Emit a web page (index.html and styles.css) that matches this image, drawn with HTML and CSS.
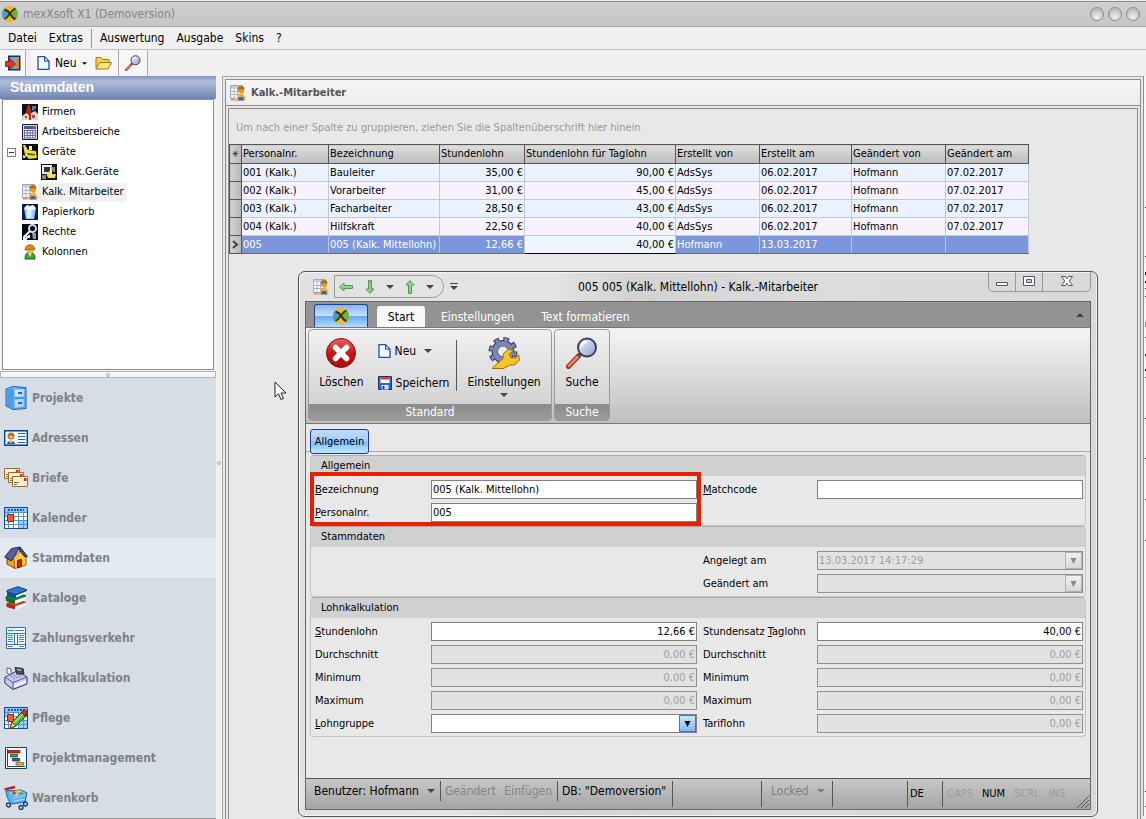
FILE: index.html
```
<!DOCTYPE html>
<html lang="de">
<head>
    <meta charset="UTF-8">
    <meta name="viewport" content="width=device-width, initial-scale=1.0">
    <title>mexXsoft X1 (Demoversion)</title>
    <link rel="stylesheet" href="styles.css">
</head>
<body>
    <!-- shared icons -->
    <svg class="icon-defs" width="0" height="0" aria-hidden="true">
        <defs>
            <linearGradient id="g-blue" x1="0" y1="0" x2="1" y2="1"><stop offset="0" stop-color="#e4f3ff"/><stop offset="1" stop-color="#8cc4f8"/></linearGradient>
            <linearGradient id="g-red" x1="0" y1="0" x2="0" y2="1"><stop offset="0" stop-color="#e8645c"/><stop offset="0.5" stop-color="#c8151a"/><stop offset="1" stop-color="#a90d12"/></linearGradient>
            <linearGradient id="g-lens" x1="0" y1="0" x2="1" y2="1"><stop offset="0" stop-color="#f4f6ff"/><stop offset="1" stop-color="#8f9ccf"/></linearGradient>
            <linearGradient id="g-green" x1="0" y1="0" x2="0" y2="1"><stop offset="0" stop-color="#b4ecb4"/><stop offset="1" stop-color="#5cba64"/></linearGradient>
            <symbol id="i-logo" viewBox="0 0 18 18">
                <circle cx="9" cy="9" r="8" fill="#f0b818"/>
                <path d="M9 9 14 2.800A8 8 0 0 1 14 15.200Z" fill="#6db33a"/>
                <path d="M9 9 3 3.500A8 8 0 0 0 3 14.500Z" fill="#4a9fb8"/>
                <path d="M3.500 4.500C6 5 8 7 9.500 9.500S12 13.500 14.500 14" fill="none" stroke="#2e3414" stroke-width="2"/>
                <path d="M14.500 3.500C11 5 9 8 7.500 10.500S5 13.500 3.500 14" fill="none" stroke="#2e3414" stroke-width="1.600"/>
            </symbol>
            <symbol id="i-exit" viewBox="0 0 16 16">
                <path d="M3 .5h12.500v15H3Z" fill="#12355c"/>
                <path d="M4.500 2H14v12H4.500Z" fill="#d8843a"/>
                <path d="M6 2h7l-2 3v9H6Z" fill="#58b4e8"/>
                <path d="M.5 6.500H5V3.500L10.500 9 5 14.500v-3H.5Z" fill="#e03818" stroke="#8c1408" stroke-width=".8"/>
            </symbol>
            <symbol id="i-page" viewBox="0 0 13 14">
                <path d="M1 .7h6.500L12 5.200v8.100H1Z" fill="#f2f8ff" stroke="#1c50b0" stroke-width="1.300"/>
                <path d="M7.500.7v4.500H12Z" fill="#b8d8f8" stroke="#1c50b0"/>
            </symbol>
            <symbol id="i-folder" viewBox="0 0 17 14">
                <path d="M1 12.500V1.500h5l1.500 2H14v3" fill="#f8cc50" stroke="#a87810"/>
                <path d="M1 13 4.500 6.500h12L13 13Z" fill="#ffe478" stroke="#a87810"/>
            </symbol>
            <symbol id="i-lens" viewBox="0 0 32 32">
                <path d="M2.500 29.500 13 18.500" stroke="#a02818" stroke-width="5" stroke-linecap="round"/>
                <path d="M2.800 29 12.500 19" stroke="#f08068" stroke-width="2.600" stroke-linecap="round"/>
                <path d="M12 19.500 15 16.500" stroke="#505468" stroke-width="3"/>
                <circle cx="21" cy="10.500" r="9" fill="url(#g-lens)" stroke="#3c3f58" stroke-width="2"/>
                <path d="M15 10a6.500 6.500 0 0 1 6-5" fill="none" stroke="#fff" stroke-width="2"/>
            </symbol>
            <symbol id="i-staff" viewBox="0 0 16 16">
                <path d="M.5.500h12v13H.5Z" fill="#fff" stroke="#a0a8c0"/>
                <path d="M1 1h11v2.500H1Z" fill="#c4cce4"/>
                <path d="M1 6.500h11M1 9.500h11M4 3v10M7.500 3v10" stroke="#a8b0cc"/>
                <path d="M1 13.500 9 15.500H1Z" fill="#f08848"/>
                <circle cx="11" cy="5" r="3.200" fill="#e89828"/>
                <path d="M7.500 4.500a3.500 3.500 0 0 1 7 0Z" fill="#b86c10"/>
                <path d="M6.500 15.500c0-5 2-7 4.500-7s4.500 2 4.500 7Z" fill="#f0b038"/>
                <path d="M9 12h4l1 3.500H8Z" fill="#3468c0"/>
            </symbol>
            <symbol id="i-firm" viewBox="0 0 16 16">
                <path d="M0 0h16v16H0Z" fill="#10101c"/>
                <path d="M4 16V7l2-6h2l1 6v9Z" fill="#b02818"/>
                <path d="M0 16v-4l4-3 3 2v5ZM9 16V9l4-2 3 3v6Z" fill="#e8d0c4"/>
                <path d="M10 2h4v3l-4 2Z" fill="#5878a8"/>
                <path d="M3 12h2v2H3Zm7-1h3v3h-3Z" fill="#a05048"/>
            </symbol>
            <symbol id="i-calc" viewBox="0 0 16 16">
                <path d="M.5.500h15v15H.5Z" fill="#d4d8f0" stroke="#16163c"/>
                <path d="M2 2h12v3H2Z" fill="#50587c"/>
                <path d="M11 2h3v2h-3Z" fill="#c44830"/>
                <path d="M2 6h12v8H2Z" fill="#fff"/>
                <path d="M2 6.500h12M2 9h12M2 11.500h12M2 14h12M2.500 6v8M5.300 6v8M8 6v8M10.700 6v8M13.500 6v8" stroke="#6468a8"/>
            </symbol>
            <symbol id="i-device" viewBox="0 0 16 16">
                <path d="M0 0h16v16H0Z" fill="#08080c"/>
                <path d="M1 1h2l3 5 8 1 1 7-8 1-4-4Z" fill="#e8dc48"/>
                <path d="M5 9l8 1v1.500L6 11Z" fill="#5c5814"/>
                <path d="M7 2h3v4H7Z" fill="#f4f0b0"/><path d="M1 11l3 1-1 2H1Z" fill="#e4e4d0"/>
            </symbol>
            <symbol id="i-device2" viewBox="0 0 16 16">
                <path d="M0 0h16v16H0Z" fill="#101010"/>
                <path d="M1 1h10v9H1Z" fill="#f0f0ec"/>
                <path d="M3 3h6v5H3Z" fill="#283838"/>
                <path d="M5 9l4-2 1 3h5l-1 4H7Z" fill="#f0e048"/>
                <path d="M1 11h4v4H1Zm9-8h4v5h-2Z" fill="#8c8c80"/>
            </symbol>
            <symbol id="i-bin" viewBox="0 0 16 16">
                <path d="M0 0h16v16H0Z" fill="#0a1c48"/>
                <path d="M2 4h12l-2 11H4Z" fill="#9cccf4"/>
                <path d="M5 6h5l-1 8H5Z" fill="#dcf0ff"/>
                <path d="M2 4 5 1l3 1 3-1 3 3-3 2H5Z" fill="#f4faff"/>
            </symbol>
            <symbol id="i-key" viewBox="0 0 16 16">
                <path d="M0 0h16v16H0Z" fill="#060810"/>
                <circle cx="10.500" cy="4.500" r="3.500" fill="none" stroke="#d0d8e4" stroke-width="2"/>
                <path d="M8 7 2 13v2h2l1-2h2v-2" fill="none" stroke="#e8f0f8" stroke-width="2"/>
                <path d="M10 9h4v6h-3Z" fill="#8c98a8"/>
            </symbol>
            <symbol id="i-crew" viewBox="0 0 16 16">
                <path d="M3 15c0-5 2-7 5-7s5 2 5 7Z" fill="#3cac34" stroke="#186018"/>
                <path d="M6.500 9h3L8 13Z" fill="#f4f4e8"/>
                <circle cx="8" cy="6" r="3.500" fill="#f0b048"/>
                <path d="M3 6c0-7 10-7 10 0l-2-.5H5Z" fill="#d89018" stroke="#8c5408" stroke-width=".7"/>
            </symbol>
            <symbol id="i-cabinet" viewBox="0 0 24 24">
                <path d="M2 3 9 .5 22 1.500v21L9 23.500 2 20Z" fill="#8cc8f8" stroke="#1460b8"/>
                <path d="M9 2v21L2.500 19.800V3.500Z" fill="#4c9ce4"/>
                <path d="M10 3 21 2.500v8.500l-11 .8ZM10 13l11-.8v9.300L10 22.500Z" fill="url(#g-blue)" stroke="#3c8cdc"/>
                <path d="M14 7h4M14 17h4" stroke="#103c80" stroke-width="1.500"/>
            </symbol>
            <symbol id="i-card" viewBox="0 0 24 24">
                <path d="M.7 4.700h22.600v14.600H.7Z" fill="#eef6ff" stroke="#0c3c88" stroke-width="1.400"/>
                <path d="M14 7.500h7.500M14 10.500h7.500M14 13.500h7.500M14 16.500h7.500" stroke="#2868b8"/>
                <circle cx="7" cy="10" r="3.500" fill="#b87818"/>
                <path d="M5.500 10h3v2h-3Z" fill="#f8c888"/>
                <path d="M3 18c0-4 8-4 8 0Z" fill="#3058a0"/>
                <path d="M6 14h2v3H6Z" fill="#f0d040"/>
            </symbol>
            <symbol id="i-mail" viewBox="0 0 24 24">
                <g fill="#fff0cc" stroke="#a06c28"><path d="M.5 2.500h15v10H.5Z"/><path d="M4.500 6.500h15v10h-15Z"/><path d="M8.500 10.500h15v10h-15Z"/></g>
                <path d="M12 4h2.500v2.500H12ZM16 8h2.500v2.500H16ZM20 12h2.500v3H20Z" fill="#d02818"/>
                <path d="M2 8.500h2M2 10.500h2M6 12.500h2M6 14.500h2M10 16.500h5M10 18.500h3" stroke="#7c6c58"/>
            </symbol>
            <symbol id="i-calendar" viewBox="0 0 24 24">
                <path d="M.5 1.500h23v21H.5Z" fill="#fff" stroke="#0c4c9c"/>
                <path d="M1 2h22v4H1Z" fill="#8cc4f4"/>
                <path d="M4 4h16" stroke="#205898" stroke-width="2" stroke-dasharray="2 1"/>
                <path d="M15 15h8v7h-8ZM1 6h4v4H1Z" fill="#9cccf8"/>
                <path d="M1 6.500h22M1 10.500h22M1 14.500h22M1 18.500h22M4.500 6v16M9.500 6v16M14.500 6v16M19.500 6v16" stroke="#4c94d8"/>
                <path d="M3.500 8.500h6v7h-6Z" fill="#f05838" stroke="#a41c0c"/>
            </symbol>
            <symbol id="i-house" viewBox="0 0 24 24">
                <path d="M3 12v6l8 4.500V13Z" fill="#f0a020" stroke="#804808"/>
                <path d="M9.500 12 17 4l5 7.500V19l-11 3.500Z" fill="#ffcc38" stroke="#a46008"/>
                <path d="M.7 11 7.500 2.500 16 1 9.500 11.500 7 15Z" fill="#5c5ca4" stroke="#28285c"/>
                <path d="M16 1 23.500 10.500l-2.500.5L15.500 4.500Z" fill="#484888" stroke="#28285c"/>
                <path d="M13.500 14.500l4-1.200v7.200l-4 1.200Z" fill="#c82810" stroke="#701408"/>
            </symbol>
            <symbol id="i-books" viewBox="0 0 24 24">
                <path d="M3 17.500 14 14.500l8 2-11 5-8-1Z" fill="#d83c28" stroke="#801808"/>
                <path d="M3 17.500v3.500l8 2.500v-3.500Z" fill="#b82818"/>
                <path d="M11 20.500l11-4v3l-11 4Z" fill="#fff"/>
                <path d="M2 11 13 7.500l9 2.500-11 5.500L2 13Z" fill="#188c30" stroke="#08501c"/>
                <path d="M2 11v4l9 3v-3.500Z" fill="#107024"/>
                <path d="M11 14.500l11-4v3.500l-11 4Z" fill="#f0f4f4"/>
                <path d="M3 6v4l9 2.500 10-5V4L12 9Z" fill="#184c98"/>
                <path d="M12 9.500l10-4v2l-10 4Z" fill="#f8fcff"/>
                <path d="M3 4.500 14 .7 23 4 12 8.500 3 6Z" fill="#2c78d0" stroke="#103c80"/>
            </symbol>
            <symbol id="i-sheet" viewBox="0 0 24 24">
                <path d="M2.500 1.500h19v21h-19Z" fill="#f4faff" stroke="#2c6cac"/>
                <path d="M4 4.500h6" stroke="#50a050" stroke-width="1.500"/>
                <path d="M11 4.500h9M3 7.500h18M3 18.500h18M10.500 7v12M13.500 7v12" stroke="#3c78b4"/>
                <path d="M4 9.500h5M4 11.500h5M4 13.500h5M4 15.500h5M4 20.500h5M15 9.500h5M15 11.500h5M15 13.500h5M15 15.500h5M15 20.500h5" stroke="#4c84bc"/>
            </symbol>
            <symbol id="i-register" viewBox="0 0 24 24">
                <path d="M1 11 13 5l10 6v7L9 23.500.7 17Z" fill="#c8c8ec" stroke="#34346c"/>
                <path d="M1 11 9 16.500 23 11M9 16.500v7" fill="none" stroke="#5c5c94"/>
                <path d="M10 18.500 22 14v3l-12 4.500Z" fill="#f0f0ff"/>
                <path d="M3 2l4 1v6l-4-2Z" fill="#fff" stroke="#5c5c7c"/>
                <path d="M11 1.500l8 1 1 5-7 1Z" fill="#445454" stroke="#242440"/>
                <path d="M13 3.500l4 .5" stroke="#7cdc7c" stroke-width="1.500"/>
                <path d="M7 11l8-3M9 13l9-3.500" stroke="#8080b8" stroke-dasharray="2 1"/>
            </symbol>
            <symbol id="i-pencil" viewBox="0 0 24 24">
                <path d="M6 22.500 8 16 19 5l4 4L12 20Z" fill="#58b038" stroke="#1c5810"/>
                <path d="M10 17 20.500 6.500" stroke="#a8e468" stroke-width="1.500"/>
                <path d="M17.500 6.500 20.500 3l3 3.500L21 10Z" fill="#e02c18" stroke="#801008"/>
                <path d="M6 22.500 8 16l4 4Z" fill="#f4cc80" stroke="#604018"/>
            </symbol>
            <symbol id="i-gantt" viewBox="0 0 24 24">
                <path d="M1.500 1.500h21v21h-21Z" fill="#f4f8ff" stroke="#10406c"/>
                <path d="M3.500 3v17.500H21" fill="none" stroke="#3c3c50"/>
                <path d="M4 4.500h12v2.500H4Z" fill="#e02010" stroke="#601010" stroke-width=".7"/>
                <path d="M6.500 8.500h7V11h-7Z" fill="#30b030" stroke="#104810" stroke-width=".7"/>
                <path d="M8.500 12.500h7V15h-7Z" fill="#3060d0" stroke="#102050" stroke-width=".7"/>
                <path d="M12 16.500h7.500V19H12Z" fill="#f4c020" stroke="#604c10" stroke-width=".7"/>
            </symbol>
            <symbol id="i-cart" viewBox="0 0 24 24">
                <path d="M2 5c1 7 3 11 6 13l13-2 2-9-6-3Z" fill="#58b4f0" stroke="#1464ac"/>
                <path d="M4 6l12-2 6 3.500-11 3Z" fill="#c8ecff" stroke="#3c90d0" stroke-width=".7"/>
                <path d="M7 6l4-1 2 3-3 1Z" fill="#d84030"/><path d="M11 5l4-.500 2 2-4 1.500Z" fill="#f0c830"/><path d="M14 7l4-1 2 1.500-5 1.500Z" fill="#48a838"/>
                <path d="M9 12l13-3M10 15l11-2" stroke="#a8dcfc"/>
                <path d="M.7 3.500 11 1" stroke="#c01c18" stroke-width="2.500"/>
                <g fill="#a8d4f4" stroke="#183c68" stroke-width="1.300"><circle cx="4.500" cy="19" r="2"/><circle cx="17" cy="21.500" r="2"/><circle cx="21.500" cy="18" r="2"/></g>
            </symbol>
            <symbol id="i-delete" viewBox="0 0 32 32">
                <circle cx="16" cy="16" r="14.500" fill="url(#g-red)" stroke="#8c0c10"/>
                <path d="M10.500 10.500 21.500 21.500M21.500 10.500 10.500 21.500" stroke="#fff" stroke-width="5.500" stroke-linecap="round"/>
            </symbol>
            <symbol id="i-disk" viewBox="0 0 14 14">
                <path d="M.5.500h13v13H.5Z" fill="#2868c8" stroke="#103878"/>
                <path d="M2.500 1h9v6h-9Z" fill="#fff"/><path d="M2.500 1h9v2.500h-9Z" fill="#e03828"/>
                <path d="M3.500 9h7v4.500h-7Z" fill="#d8e4f4"/><path d="M4.500 10h2v3h-2Z" fill="#183c78"/>
            </symbol>
            <symbol id="i-gear" viewBox="0 0 32 32">
                <circle cx="15" cy="14.500" r="12" fill="none" stroke="#303858" stroke-width="5" stroke-dasharray="5.400 4.020"/>
                <circle cx="15" cy="14.500" r="8" fill="none" stroke="#303858" stroke-width="7"/>
                <circle cx="15" cy="14.500" r="12" fill="none" stroke="#7c88b4" stroke-width="3.200" stroke-dasharray="3.600 5.820" stroke-dashoffset="-.9"/>
                <circle cx="15" cy="14.500" r="8" fill="none" stroke="#7c88b4" stroke-width="5"/>
                <circle cx="15" cy="14.500" r="5" fill="#ececf0"/>
                <path d="M4 31.500 15 21.500l.5-5 5-4 5.500.5-4.500 4 1 3.500 4.500 1 3.800-3.700.7 5-4.500 5-5.500.4L15.500 31.500Z" fill="#f8c424" stroke="#a06c08"/>
            </symbol>
            <symbol id="i-arrow" viewBox="0 0 16 16">
                <path d="M1.500 8 6 4v2.500h8.500v3H6V12Z" fill="url(#g-green)" stroke="#4c9c54"/>
            </symbol>
            <symbol id="i-down" viewBox="0 0 8 4"><path d="M0 0h8L4 4Z" fill="currentColor"/></symbol>
            <symbol id="i-combo" viewBox="0 0 9 9"><path d="M1.500 2h6L4.500 8Z" fill="currentColor"/></symbol>
        </defs>
    </svg>

    <div class="app">
        <header class="titlebar">
            <svg class="icon-18"><use href="#i-logo"/></svg>
            <h1>mexXsoft X1 (Demoversion)</h1>
            <div class="round-buttons">
                <button type="button" aria-label="Minimieren"></button>
                <button type="button" aria-label="Maximieren"></button>
                <button type="button" aria-label="Schließen"></button>
            </div>
        </header>

        <nav class="menubar">
            <button type="button">Datei</button>
            <button type="button">Extras</button>
            <span class="menu-line"></span>
            <button type="button">Auswertung</button>
            <button type="button">Ausgabe</button>
            <button type="button">Skins</button>
            <button type="button">?</button>
        </nav>

        <div class="toolbar">
            <div class="tool-group">
                <button type="button" aria-label="Beenden"><svg class="icon-16"><use href="#i-exit"/></svg></button>
            </div>
            <div class="tool-group">
                <button type="button" class="tool-new"><svg class="icon-page"><use href="#i-page"/></svg>Neu <svg class="caret-small"><use href="#i-down"/></svg></button>
                <button type="button" aria-label="Öffnen"><svg class="icon-folder"><use href="#i-folder"/></svg></button>
            </div>
            <div class="tool-group">
                <button type="button" aria-label="Suchen"><svg class="icon-16"><use href="#i-lens"/></svg></button>
            </div>
        </div>

        <div class="workspace">
            <aside class="sidebar">
                <h2>Stammdaten</h2>
                <ul class="tree">
                    <li><svg class="icon-16"><use href="#i-firm"/></svg><span>Firmen</span></li>
                    <li><svg class="icon-16"><use href="#i-calc"/></svg><span>Arbeitsbereiche</span></li>
                    <li class="open"><button type="button" class="toggle" aria-label="Zuklappen"></button><svg class="icon-16"><use href="#i-device"/></svg><span>Geräte</span></li>
                    <li class="child"><svg class="icon-16"><use href="#i-device2"/></svg><span>Kalk.Geräte</span></li>
                    <li class="selected"><svg class="icon-16"><use href="#i-staff"/></svg><span>Kalk. Mitarbeiter</span></li>
                    <li><svg class="icon-16"><use href="#i-bin"/></svg><span>Papierkorb</span></li>
                    <li><svg class="icon-16"><use href="#i-key"/></svg><span>Rechte</span></li>
                    <li><svg class="icon-16"><use href="#i-crew"/></svg><span>Kolonnen</span></li>
                </ul>
                <div class="splitter-h"><i></i></div>
                <nav class="modules">
                    <a href="#"><svg class="icon-24"><use href="#i-cabinet"/></svg>Projekte</a>
                    <a href="#"><svg class="icon-24"><use href="#i-card"/></svg>Adressen</a>
                    <a href="#"><svg class="icon-24"><use href="#i-mail"/></svg>Briefe</a>
                    <a href="#"><svg class="icon-24"><use href="#i-calendar"/></svg>Kalender</a>
                    <a href="#" class="active"><svg class="icon-24"><use href="#i-house"/></svg>Stammdaten</a>
                    <a href="#"><svg class="icon-24"><use href="#i-books"/></svg>Kataloge</a>
                    <a href="#"><svg class="icon-24"><use href="#i-sheet"/></svg>Zahlungsverkehr</a>
                    <a href="#"><svg class="icon-24"><use href="#i-register"/></svg>Nachkalkulation</a>
                    <a href="#"><svg class="icon-24"><use href="#i-calendar"/><use href="#i-pencil"/></svg>Pflege</a>
                    <a href="#"><svg class="icon-24"><use href="#i-gantt"/></svg>Projektmanagement</a>
                    <a href="#"><svg class="icon-24"><use href="#i-cart"/></svg>Warenkorb</a>
                </nav>
            </aside>
            <div class="splitter-v"><i></i></div>

            <main class="content">
                <div class="content-head">
                    <svg class="icon-16"><use href="#i-staff"/></svg>
                    <h2>Kalk.-Mitarbeiter</h2>
                </div>
                <div class="content-body">
                    <div class="grid-panel">
                        <p class="group-hint">Um nach einer Spalte zu gruppieren, ziehen Sie die Spaltenüberschrift hier hinein</p>
                        <table class="grid">
                            <colgroup>
                                <col class="c-mark"><col class="c-nr"><col class="c-name"><col class="c-wage"><col class="c-day">
                                <col class="c-by"><col class="c-on"><col class="c-mod"><col class="c-modon">
                            </colgroup>
                            <thead>
                                <tr><th class="mark">✳</th><th>Personalnr.</th><th>Bezeichnung</th><th>Stundenlohn</th><th>Stundenlohn für Taglohn</th><th>Erstellt von</th><th>Erstellt am</th><th>Geändert von</th><th>Geändert am</th></tr>
                            </thead>
                            <tbody>
                                <tr><td class="mark"></td><td>001 (Kalk.)</td><td>Bauleiter</td><td class="num">35,00 €</td><td class="num">90,00 €</td><td>AdsSys</td><td>06.02.2017</td><td>Hofmann</td><td>07.02.2017</td></tr>
                                <tr><td class="mark"></td><td>002 (Kalk.)</td><td>Vorarbeiter</td><td class="num">31,00 €</td><td class="num">45,00 €</td><td>AdsSys</td><td>06.02.2017</td><td>Hofmann</td><td>07.02.2017</td></tr>
                                <tr><td class="mark"></td><td>003 (Kalk.)</td><td>Facharbeiter</td><td class="num">28,50 €</td><td class="num">43,00 €</td><td>AdsSys</td><td>06.02.2017</td><td>Hofmann</td><td>07.02.2017</td></tr>
                                <tr><td class="mark"></td><td>004 (Kalk.)</td><td>Hilfskraft</td><td class="num">22,50 €</td><td class="num">40,00 €</td><td>AdsSys</td><td>06.02.2017</td><td>Hofmann</td><td>07.02.2017</td></tr>
                                <tr class="current"><td class="mark"><svg viewBox="0 0 7 9"><path d="M1 1 5 4.500 1 8" fill="none" stroke="#444" stroke-width="2"/></svg></td><td>005</td><td>005 (Kalk. Mittellohn)</td><td class="num">12,66 €</td><td class="num focus">40,00 €</td><td>Hofmann</td><td>13.03.2017</td><td></td><td></td></tr>
                            </tbody>
                        </table>
                    </div>
                </div>
            </main>
            <svg class="edge" width="3" height="740" aria-hidden="true">
                <path d="M.5 0v740" stroke="#8c8c8c"/>
                <path d="M1 0h2v740H1Z" fill="#f6f6f6"/>
                <path d="M2.500 131v1M2.500 180v1M2.500 196v3M2.500 205v2M2.500 212v1M2.500 220v1M2.500 261v1M2.500 278v2M2.500 293v2M2.500 301v1M2.500 342v1M2.500 382v1M2.500 423v1M2.500 464v1M2.500 715v1M2.500 730v1" stroke="#111"/>
                <path d="M2.500 246v5" stroke="#48a0d8"/>
            </svg>
        </div>
    </div>

    <section class="dialog" role="dialog" aria-labelledby="dialog-title">
        <div class="dialog-title">
            <svg class="icon-16"><use href="#i-staff"/></svg>
            <div class="quick">
                <button type="button" aria-label="Zurück"><svg class="icon-16"><use href="#i-arrow"/></svg></button>
                <button type="button" aria-label="Weiter"><svg class="icon-16 arrow-down"><use href="#i-arrow"/></svg></button>
                <button type="button" aria-label="Weiter-Liste"><svg class="caret"><use href="#i-down"/></svg></button>
                <button type="button" aria-label="Vorheriger"><svg class="icon-16 arrow-up"><use href="#i-arrow"/></svg></button>
                <button type="button" aria-label="Vorheriger-Liste"><svg class="caret"><use href="#i-down"/></svg></button>
            </div>
            <button type="button" class="quick-more" aria-label="Anpassen"><svg class="caret"><use href="#i-down"/></svg></button>
            <h2 id="dialog-title">005 005 (Kalk. Mittellohn) - Kalk.-Mitarbeiter</h2>
            <div class="window-buttons">
                <button type="button" aria-label="Minimieren"><svg width="14" height="14" viewBox="0 0 14 14"><path d="M1.500 7.500h11v3h-11Z" fill="#fff" stroke="#505468"/></svg></button>
                <button type="button" aria-label="Maximieren"><svg width="14" height="14" viewBox="0 0 14 14"><path d="M1.500 1.500h11v9h-11Z" fill="#fff" stroke="#505468"/><path d="M4.500 4.500h5v3h-5Z" fill="#ccc" stroke="#505468"/></svg></button>
                <button type="button" class="close" aria-label="Schließen"><svg width="14" height="14" viewBox="0 0 14 14"><path d="M1.500 1.500h4L7 3.700l1.500-2.200h4L9.300 6l3.200 4.500h-4L7 8.300l-1.500 2.200h-4L4.700 6Z" fill="#fff" stroke="#505468"/></svg></button>
            </div>
        </div>

        <div class="dialog-body">
            <div class="ribbon-tabs">
                <button type="button" class="app-button" aria-label="Menü"><svg class="icon-18"><use href="#i-logo"/></svg></button>
                <button type="button" class="ribbon-tab active">Start</button>
                <button type="button" class="ribbon-tab">Einstellungen</button>
                <button type="button" class="ribbon-tab">Text formatieren</button>
                <button type="button" class="collapse" aria-label="Menüband minimieren"><svg class="caret"><use href="#i-down"/></svg></button>
            </div>

            <div class="ribbon">
                <div class="ribbon-group">
                    <div class="ribbon-items">
                        <button type="button" class="big"><svg class="icon-32"><use href="#i-delete"/></svg>Löschen</button>
                        <div class="small-stack">
                            <button type="button"><svg class="icon-page"><use href="#i-page"/></svg>Neu<svg class="caret"><use href="#i-down"/></svg></button>
                            <button type="button"><svg class="icon-disk"><use href="#i-disk"/></svg>Speichern</button>
                        </div>
                        <button type="button" class="big settings"><svg class="icon-32"><use href="#i-gear"/></svg>Einstellungen<svg class="caret"><use href="#i-down"/></svg></button>
                    </div>
                    <div class="ribbon-caption">Standard</div>
                </div>
                <div class="ribbon-group search">
                    <div class="ribbon-items">
                        <button type="button" class="big"><svg class="icon-32"><use href="#i-lens"/></svg>Suche</button>
                    </div>
                    <div class="ribbon-caption">Suche</div>
                </div>
            </div>

            <div class="page-tabs">
                <button type="button">Allgemein</button>
            </div>

            <form class="page">
                <fieldset>
                    <div class="legend">Allgemein</div>
                    <div class="fields">
                        <label for="bezeichnung"><u>B</u>ezeichnung</label><input type="text" id="bezeichnung" value="005 (Kalk. Mittellohn)">
                        <label for="matchcode"><u>M</u>atchcode</label><input type="text" id="matchcode">
                        <label for="personalnr"><u>P</u>ersonalnr.</label><input type="text" id="personalnr" value="005">
                    </div>
                    <div class="highlight"></div>
                </fieldset>
                <fieldset>
                    <div class="legend">Stammdaten</div>
                    <div class="fields">
                        <label for="angelegt" class="right">Angelegt am</label>
                        <span class="combo"><select id="angelegt" disabled><option>13.03.2017 14:17:29</option></select><svg><use href="#i-combo"/></svg></span>
                        <label for="geaendert" class="right">Geändert am</label>
                        <span class="combo"><select id="geaendert" disabled><option></option></select><svg><use href="#i-combo"/></svg></span>
                    </div>
                </fieldset>
                <fieldset>
                    <div class="legend">Lohnkalkulation</div>
                    <div class="fields money">
                        <label for="stundenlohn"><u>S</u>tundenlohn</label><input type="text" id="stundenlohn" value="12,66 €">
                        <label for="taglohn">Stundensatz <u>T</u>aglohn</label><input type="text" id="taglohn" value="40,00 €">
                        <label for="durchschnitt1">Durchschnitt</label><input type="text" id="durchschnitt1" value="0,00 €" disabled>
                        <label for="durchschnitt2">Durchschnitt</label><input type="text" id="durchschnitt2" value="0,00 €" disabled>
                        <label for="minimum1">Minimum</label><input type="text" id="minimum1" value="0,00 €" disabled>
                        <label for="minimum2">Minimum</label><input type="text" id="minimum2" value="0,00 €" disabled>
                        <label for="maximum1">Maximum</label><input type="text" id="maximum1" value="0,00 €" disabled>
                        <label for="maximum2">Maximum</label><input type="text" id="maximum2" value="0,00 €" disabled>
                        <label for="lohngruppe"><u>L</u>ohngruppe</label>
                        <span class="combo"><select id="lohngruppe"><option></option></select><svg><use href="#i-combo"/></svg></span>
                        <label for="tariflohn">Tariflohn</label><input type="text" id="tariflohn" value="0,00 €" disabled>
                    </div>
                </fieldset>
            </form>

            <footer class="status">
                <button type="button" class="user">Benutzer: Hofmann<svg class="caret"><use href="#i-down"/></svg></button>
                <div class="changed"><span>Geändert</span><span>Einfügen</span></div>
                <div class="database">DB: "Demoversion"</div>
                <div class="spacer"></div>
                <button type="button" class="locked" disabled>Locked<svg class="caret"><use href="#i-down"/></svg></button>
                <div class="blank"></div>
                <div class="lang">DE</div>
                <div class="keys"><span>CAPS</span><span class="on">NUM</span><span>SCRL</span><span>INS</span></div>
                <svg class="grip" width="12" height="12"><path d="M0 12 12 0M4 12l8-8M8 12l4-4" stroke="#555"/></svg>
            </footer>
        </div>
    </section>

    <svg class="cursor" width="13" height="20" viewBox="0 0 13 20" aria-hidden="true"><path d="M1 1v15l3.500-3.200L7 18.500l2.500-1L7 12h5Z" fill="#fff" stroke="#222"/></svg>
</body>
</html>
```
FILE: styles.css
```
* {
    box-sizing: border-box;
}
body {
    margin: 0;
    height: 100vh;
    overflow: hidden;
    position: relative;
    background: #f0f0f0;
    color: #000;
    font-family: 'DejaVu Sans Condensed', 'DejaVu Sans', sans-serif;
    font-size: 11px;
    line-height: 14px;
}
h1, h2, p, ul, fieldset {
    margin: 0;
    padding: 0;
    border: none;
    font-size: inherit;
    font-weight: normal;
}
button, input, select {
    margin: 0;
    padding: 0;
    border: none;
    background: none;
    color: inherit;
    font: inherit;
}
svg {
    flex: none;
}
.icon-defs {
    position: absolute;
}
.icon-16 { width: 16px; height: 16px; }
.icon-18 { width: 18px; height: 18px; }
.icon-24 { width: 24px; height: 24px; }
.icon-32 { width: 32px; height: 32px; }
.icon-page { width: 13px; height: 14px; }
.icon-disk { width: 14px; height: 14px; }
.icon-folder { width: 17px; height: 14px; }
.caret { width: 8px; height: 4px; color: #444; }
.caret-small { width: 5px; height: 3px; }

/* main window */
.app {
    height: 100%;
    display: flex;
    flex-direction: column;
}
.titlebar {
    display: flex;
    align-items: center;
    height: 26px;
    padding: 0 6px 0 1px;
    margin-top: 1px;
    border-top: 1px solid #8a8a8a;
    border-bottom: 1px solid #a8a8a8;
    background: linear-gradient(#cfcfcf, #c6c6c6);
    color: #858585;
    font-size: 12px;
}
.titlebar h1 {
    flex: 1;
    margin-left: 4px;
}
.round-buttons {
    display: flex;
    gap: 4px;
}
.round-buttons button {
    width: 14px;
    height: 14px;
    border: 1px solid #8c8c8c;
    border-radius: 50%;
    background: radial-gradient(circle at 50% 75%, #f4f4f4, #bcbcbc 70%);
}
.menubar {
    display: flex;
    align-items: center;
    height: 23px;
    gap: 12px;
    padding-left: 8px;
    border-bottom: 1px solid #c0c0c0;
    font-size: 12px;
}
.menu-line {
    width: 1px;
    height: 19px;
    margin: 0 -4px;
    background: #999;
}
.toolbar {
    display: flex;
    height: 26px;
    font-size: 12px;
}
.tool-group {
    display: flex;
    align-items: center;
    gap: 8px;
    padding: 0 6px;
    border-right: 1px solid #a8a8a8;
    background: #f6f6f6;
}
.tool-group:first-child {
    padding: 0 4px 0 5px;
    margin-right: 5px;
}
.tool-group button {
    display: flex;
    align-items: center;
}
.tool-new {
    gap: 5px;
}
.workspace {
    flex: 1;
    min-height: 0;
    display: flex;
}
.sidebar {
    width: 216px;
    display: flex;
    flex-direction: column;
}
.sidebar h2 {
    height: 23px;
    padding-left: 10px;
    background: linear-gradient(#8196c8, #b0bcd8 25%, #7085b4);
    color: #fff;
    font: bold 14px/22px 'Liberation Sans', sans-serif;
}
.tree {
    flex: 1;
    margin: 0 2px 1px;
    padding-top: 2px;
    border: 1px solid #8c8c8c;
    background: #fff;
    list-style: none;
}
.tree li {
    display: flex;
    align-items: center;
    height: 20px;
    padding-left: 19px;
}
.tree .child {
    padding-left: 38px;
}
.tree .open {
    padding-left: 4px;
}
.tree span {
    padding: 2px 2px 3px 4px;
}
.tree .selected span {
    background: #f0f0f0;
}
.toggle {
    width: 9px;
    height: 9px;
    margin-right: 6px;
    border: 1px solid #808080;
    background: linear-gradient(#333, #333) center / 5px 1px no-repeat;
}
.splitter-h {
    height: 7px;
    display: flex;
    align-items: center;
    justify-content: center;
    border: 1px solid #b4b4b4;
    background: #f6f6f6;
}
.splitter-h i, .splitter-v i {
    width: 4px;
    height: 4px;
    border: 1px solid #aaa;
    border-radius: 50%;
}
.modules {
    background: #d6dde5;
    border-bottom: 1px solid #999;
}
.modules a {
    display: flex;
    align-items: center;
    gap: 4px;
    height: 40px;
    padding-left: 4px;
    color: #7d8288;
    font-size: 12px;
    font-weight: bold;
    text-decoration: none;
}
.modules .active {
    background: #e3eaf2;
}
.splitter-v {
    width: 7px;
    display: flex;
    align-items: center;
    justify-content: center;
    padding-top: 30px;
    border-right: 1px solid #a4a4a4;
}
.content {
    flex: 1;
    min-width: 0;
    display: flex;
    flex-direction: column;
    padding: 2px 2px 0;
    background: #e8e8e8;
    border-top: 1px solid #a8a8a8;
}
.content-head {
    display: flex;
    align-items: center;
    gap: 5px;
    height: 27px;
    padding-left: 4px;
    border: 1px solid #8c8c8c;
    background: linear-gradient(#f6f6f6, #ececec);
    color: #555;
}
.content-head h2 {
    font-weight: bold;
}
.content-body {
    flex: 1;
    display: flex;
    padding: 2px 2px 0;
    border: 1px solid #8c8c8c;
    border-width: 0 1px;
}
.grid-panel {
    flex: 1;
    border: 1px solid #8c8c8c;
    border-bottom: none;
}
.group-hint {
    padding: 12px 7px 9px;
    color: #999;
}
.grid {
    width: 799px;
    table-layout: fixed;
    border-collapse: collapse;
}
.c-mark { width: 12px; }
.c-nr { width: 87px; }
.c-name { width: 111px; }
.c-wage { width: 85px; }
.c-day { width: 151px; }
.c-by { width: 84px; }
.c-on { width: 92px; }
.c-mod { width: 94px; }
.c-modon { width: 83px; }
.grid th {
    height: 19px;
    padding: 0 1px;
    border: 1px solid #555;
    background: linear-gradient(#dedede, #bcbcbc);
    font-weight: normal;
    text-align: left;
}
.grid td {
    height: 18px;
    padding: 0 1px;
    border: 1px solid #c0c8dc;
    background: #eaf2ff;
    white-space: nowrap;
}
.grid tr:nth-child(even) td {
    background: #f8f2ff;
}
.grid .num {
    text-align: right;
}
.grid .mark, .grid tr:nth-child(even) .mark {
    padding: 0;
    border: 1px solid #555;
    background: linear-gradient(90deg, #d4d4d4, #b4b4b4);
    font-size: 9px;
    text-align: center;
}
.mark svg {
    display: block;
    width: 7px;
    height: 9px;
    margin: 0 auto;
}
.grid .current td:not(.mark) {
    border-top-color: #6c6c58;
    border-bottom-color: #6c6c58;
    background: #7b96dd;
    color: #fff;
}
.grid .current .focus:not(.mark) {
    border-top-color: #000;
    border-bottom-color: #000;
    background: #eef6ff;
    color: #000;
}

/* record window */
.dialog {
    position: absolute;
    top: 271px;
    right: 48px;
    bottom: 2px;
    left: 298px;
    display: flex;
    flex-direction: column;
    padding: 0 6px 6px;
    border: 1px solid #555;
    border-radius: 7px;
    background: linear-gradient(100deg, #e2e2e2, #e4e4e4 28%, #d2d2d2 38%, #dcdcdc 60%, #d8d8d8);
    box-shadow: inset 0 0 0 1px #f4f4f4;
}
.dialog-title {
    display: flex;
    align-items: center;
    height: 29px;
    padding-left: 8px;
}
.quick {
    display: flex;
    align-items: center;
    gap: 8px;
    height: 23px;
    margin-left: 5px;
    padding: 0 9px 0 3px;
    border: 1px solid #999;
    border-radius: 0 12px 12px 0;
}
.quick button, .quick-more {
    display: flex;
}
.arrow-down {
    transform: rotate(-90deg);
}
.arrow-up {
    transform: rotate(90deg);
}
.quick-more {
    margin-left: 6px;
    padding-top: 2px;
    border-top: 1px solid #444;
}
.dialog-title h2 {
    flex: 1;
    padding-right: 50px;
    text-align: center;
    font-size: 12px;
}
.window-buttons {
    display: flex;
    align-self: flex-start;
    height: 20px;
    border: 1px solid #999;
    border-top: none;
    border-radius: 0 0 5px 5px;
}
.window-buttons button {
    display: flex;
    align-items: center;
    justify-content: center;
    width: 27px;
    border-right: 1px solid #999;
}
.window-buttons .close {
    width: 47px;
    border-right: none;
}
.dialog-body {
    flex: 1;
    min-height: 0;
    display: flex;
    flex-direction: column;
    border: 1px solid #666;
    background: #e8e8e8;
}
.ribbon-tabs {
    display: flex;
    align-items: flex-end;
    height: 26px;
    padding: 0 6px 0 8px;
    border-bottom: 1px solid #777;
    background: #939393;
    color: #fff;
    font-size: 12px;
}
.app-button {
    display: flex;
    justify-content: center;
    align-items: center;
    width: 54px;
    height: 23px;
    margin-right: 9px;
    border: 1px solid #1c449c;
    border-bottom: none;
    border-radius: 3px 3px 0 0;
    background: linear-gradient(#8cb4f0, #c4e0fc 48%, #6ca8f0 52%, #b4dcff);
}
.ribbon-tab {
    height: 21px;
    padding: 0 8px;
    margin-right: 8px;
}
.ribbon-tab.active {
    width: 48px;
    border-radius: 3px 3px 0 0;
    background: #f8f8f8;
    color: #000;
}
.ribbon-tab + .ribbon-tab {
    margin-right: 11px;
}
.collapse {
    display: flex;
    align-self: center;
    margin-left: auto;
    transform: rotate(180deg);
}
.ribbon {
    display: flex;
    gap: 2px;
    height: 96px;
    padding: 1px 2px;
    border-bottom: 1px solid #777;
    background: linear-gradient(#f4f4f4, #e0e0e0 40%, #bfbfbf);
    font-size: 12px;
}
.ribbon-group {
    display: flex;
    flex-direction: column;
    width: 244px;
    height: 92px;
    border: 1px solid #999;
    border-radius: 4px;
    background: linear-gradient(#f0f0f0, #cdcdcd);
    overflow: hidden;
}
.ribbon-group.search {
    width: 56px;
}
.ribbon-items {
    flex: 1;
    display: flex;
    align-items: flex-start;
    justify-content: center;
    padding-top: 7px;
}
.big {
    display: flex;
    flex-direction: column;
    align-items: center;
    gap: 6px;
}
.big .caret {
    margin-top: -2px;
}
.small-stack {
    display: flex;
    flex-direction: column;
    gap: 18px;
    padding: 7px 0 0 14px;
}
.small-stack button {
    display: flex;
    align-items: center;
    gap: 4px;
}
.small-stack .caret {
    margin-left: 4px;
}
.settings {
    position: relative;
    margin-left: 7px;
    padding-left: 11px;
}
.settings::before {
    content: "";
    position: absolute;
    top: 3px;
    left: 0;
    width: 1px;
    height: 51px;
    background: #555;
}
.ribbon-caption {
    height: 16px;
    background: linear-gradient(#8a8a8a, #9c9c9c);
    color: #fff;
    line-height: 16px;
    text-align: center;
}
.page-tabs {
    height: 28px;
    padding: 5px 4px 0;
    border-bottom: 1px solid #aaa;
}
.page-tabs button {
    position: relative;
    width: 59px;
    height: 25px;
    border: 1px solid #1c3c88;
    border-radius: 3px;
    background: linear-gradient(#c0dcfc, #a0ccfc 48%, #7cbcfc 52%, #c4e8ff);
}
.page {
    flex: 1;
    padding: 3px 4px;
}
fieldset {
    position: relative;
    min-width: 0;
    border: 1px solid #c4c4c4;
    border-top-color: #aaa;
    border-radius: 4px;
}
.legend {
    height: 20px;
    padding-left: 10px;
    background: #d0d0d0;
    line-height: 20px;
}
.fields {
    display: grid;
    grid-template-columns: 110px 1fr 108px 1fr;
    gap: 4px 6px;
    padding: 4px 2px 3px 4px;
}
.fields label {
    line-height: 19px;
}
.fields .right {
    grid-column: 3;
}
.fields input, .fields select {
    width: 100%;
    min-width: 0;
    height: 19px;
    padding: 0 1px;
    border: 1px solid #808080;
    border-radius: 0;
    background: #fff;
    appearance: none;
}
.fields input:disabled, .fields select:disabled {
    border-color: #909090;
    background: #e2e2e2;
    color: #a0a0a0;
    opacity: 1;
}
.money input {
    text-align: right;
}
.combo {
    position: relative;
    height: 19px;
}
.combo select {
    display: block;
}
.combo svg {
    position: absolute;
    top: 1px;
    right: 1px;
    width: 17px;
    height: 17px;
    padding: 3px;
    border: 1px solid #4878b8;
    background: linear-gradient(#cce4fc, #84b8f4);
    pointer-events: none;
}
.combo select:disabled + svg {
    border-color: #b0b0b0;
    background: linear-gradient(#f0f0f0, #d8d8d8);
    color: #888;
}
/* marks the two fields that have to be filled in */
.highlight {
    position: absolute;
    top: 16px;
    left: -1px;
    width: calc(50% + 4px);
    height: 54px;
    border: 4px solid #e62000;
    pointer-events: none;
}
.status {
    position: relative;
    display: flex;
    height: 31px;
    padding: 2px 0 2px 8px;
    border-top: 1px solid #555;
    background: linear-gradient(#c8c8c8, #a4a4a4);
    font-size: 12px;
    line-height: 20px;
}
.status > * {
    border-right: 1px solid #555;
    white-space: nowrap;
}
.status .caret {
    margin-left: 8px;
    vertical-align: 2px;
}
.user {
    width: 127px;
    height: 20px;
    text-align: left;
}
.changed {
    display: flex;
    justify-content: space-between;
    width: 117px;
    height: 20px;
    padding: 0 5px 0 4px;
    color: #848484;
}
.database {
    width: 115px;
    padding-left: 4px;
}
.spacer {
    flex: 1;
}
.locked {
    width: 71px;
    padding: 0 0 6px 9px;
    color: #808080;
    text-align: left;
}
.locked .caret {
    color: #808080;
}
.blank {
    width: 75px;
}
.lang {
    width: 35px;
    padding-left: 2px;
    font-size: 11px;
    line-height: 26px;
}
.keys {
    display: flex;
    gap: 9px;
    width: 147px;
    padding-left: 4px;
    color: #9c9c9c;
    font-size: 11px;
    line-height: 26px;
}
.keys .on {
    color: #000;
}
.status .keys, .status .grip {
    border: none;
}
.grip {
    position: absolute;
    right: 1px;
    bottom: 1px;
}
.cursor {
    position: absolute;
    top: 381px;
    left: 274px;
}
```
